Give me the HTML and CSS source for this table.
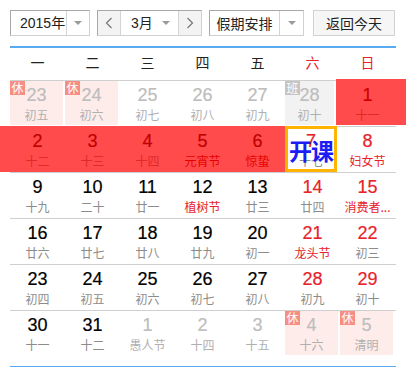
FILE: index.html
```html
<!DOCTYPE html>
<html lang="zh-CN">
<head>
<meta charset="utf-8">
<title>日历</title>
<link rel="stylesheet" href="styles.css">
</head>
<body>
<div class="cal">
  <div class="toolbar">
    <div class="sel year">
      <span class="val">2015年</span>
      <span class="drop"><i class="tri"></i></span>
    </div>
    <div class="month">
      <span class="nav"><svg width="8" height="12" viewBox="0 0 8 12"><polyline points="6.5,1 1.5,6 6.5,11" fill="none" stroke="#777" stroke-width="1.2"/></svg></span>
      <span class="mval"><span>3月</span><i class="tri"></i></span>
      <span class="nav"><svg width="8" height="12" viewBox="0 0 8 12"><polyline points="1.5,1 6.5,6 1.5,11" fill="none" stroke="#777" stroke-width="1.2"/></svg></span>
    </div>
    <div class="sel hol">
      <span class="val">假期安排</span>
      <span class="drop"><i class="tri"></i></span>
    </div>
    <button class="back">返回今天</button>
  </div>
  <div class="rule"></div>
  <div class="weekdays">
    <span>一</span><span>二</span><span>三</span><span>四</span><span>五</span><span class="we">六</span><span class="we sun">日</span>
  </div>
  <div class="weeks">
    <div class="week">
      <div class="d other rest"><span class="badge">休</span><b>23</b><em>初五</em></div>
      <div class="d other rest"><span class="badge">休</span><b>24</b><em>初六</em></div>
      <div class="d other"><b>25</b><em>初七</em></div>
      <div class="d other"><b>26</b><em>初八</em></div>
      <div class="d other"><b>27</b><em>初九</em></div>
      <div class="d other work"><span class="badge grey">班</span><b>28</b><em>初十</em></div>
      <div class="d hotcell"><b>1</b><em>十一</em></div>
    </div>
    <div class="week">
      <div class="d band first"><b>2</b><em>十二</em></div>
      <div class="d band"><b>3</b><em>十三</em></div>
      <div class="d band"><b>4</b><em>十四</em></div>
      <div class="d band"><b>5</b><em class="fest">元宵节</em></div>
      <div class="d band"><b>6</b><em class="fest">惊蛰</em></div>
      <div class="d today"><b class="red">7</b><em>十七</em><span class="note">开课</span></div>
      <div class="d"><b class="red">8</b><em class="fest">妇女节</em></div>
    </div>
    <div class="week">
      <div class="d"><b>9</b><em>十九</em></div>
      <div class="d"><b>10</b><em>二十</em></div>
      <div class="d"><b>11</b><em>廿一</em></div>
      <div class="d"><b>12</b><em class="fest">植树节</em></div>
      <div class="d"><b>13</b><em>廿三</em></div>
      <div class="d"><b class="red">14</b><em>廿四</em></div>
      <div class="d"><b class="red">15</b><em class="fest">消费者...</em></div>
    </div>
    <div class="week">
      <div class="d"><b>16</b><em>廿六</em></div>
      <div class="d"><b>17</b><em>廿七</em></div>
      <div class="d"><b>18</b><em>廿八</em></div>
      <div class="d"><b>19</b><em>廿九</em></div>
      <div class="d"><b>20</b><em>初一</em></div>
      <div class="d"><b class="red">21</b><em class="fest">龙头节</em></div>
      <div class="d"><b class="red">22</b><em>初三</em></div>
    </div>
    <div class="week">
      <div class="d"><b>23</b><em>初四</em></div>
      <div class="d"><b>24</b><em>初五</em></div>
      <div class="d"><b>25</b><em>初六</em></div>
      <div class="d"><b>26</b><em>初七</em></div>
      <div class="d"><b>27</b><em>初八</em></div>
      <div class="d"><b class="red">28</b><em>初九</em></div>
      <div class="d"><b class="red">29</b><em>初十</em></div>
    </div>
    <div class="week last">
      <div class="d"><b>30</b><em>十一</em></div>
      <div class="d"><b>31</b><em>十二</em></div>
      <div class="d other"><b>1</b><em>愚人节</em></div>
      <div class="d other"><b>2</b><em>十四</em></div>
      <div class="d other"><b>3</b><em>十五</em></div>
      <div class="d other rest"><span class="badge">休</span><b>4</b><em>十六</em></div>
      <div class="d other rest"><span class="badge">休</span><b>5</b><em>清明</em></div>
    </div>
  </div>
  <div class="rule bottom"></div>
</div>
</body>
</html>
```

FILE: styles.css
```css
html, body {
  margin: 0;
  padding: 0;
  background: #fff;
}
body {
  font-family: "Noto Sans CJK SC", "Liberation Sans", sans-serif;
  color: #333;
  overflow: hidden;
}
.cal {
  width: 406px;
  padding-top: 10px;
}
.toolbar {
  display: flex;
  height: 26px;
  padding-left: 10px;
}
.sel, .month {
  display: flex;
  height: 26px;
  box-sizing: border-box;
  border: 1px solid #a8a8a8;
  border-right-color: #d0d0d0;
  border-bottom-color: #d0d0d0;
  background: #fff;
  font-size: 14px;
  line-height: 24px;
  color: #222;
}
.year { width: 80px; }
.year .val {
  flex: none;
  width: 55px;
  padding-left: 9px;
  box-sizing: border-box;
  white-space: nowrap;
  font-family: "Liberation Sans", "Noto Sans CJK SC", sans-serif;
}
.drop {
  flex: 1;
  border-left: 1px solid #d4d4d4;
  display: flex;
  align-items: center;
  justify-content: center;
}
.tri {
  display: block;
  width: 0;
  height: 0;
  border-left: 4px solid transparent;
  border-right: 4px solid transparent;
  border-top: 4px solid #9a9a9a;
}
.month {
  width: 105px;
  margin-left: 7px;
}
.nav {
  width: 22px;
  background: #f3f3f3;
  display: flex;
  align-items: center;
  justify-content: center;
}
.month .mval {
  flex: 1;
  border-left: 1px solid #d4d4d4;
  border-right: 1px solid #d4d4d4;
  display: flex;
  align-items: center;
  padding: 0 8px 0 10px;
  justify-content: space-between;
  white-space: nowrap;
  font-family: "Liberation Sans", "Noto Sans CJK SC", sans-serif;
}
.hol {
  width: 95px;
  margin-left: 7px;
}
.hol .val { flex: none; width: 69px; text-align: center; white-space: nowrap; }
.back {
  margin-left: 9px;
  width: 82px;
  height: 26px;
  box-sizing: border-box;
  border: 1px solid #d2d2d2;
  background: #f6f6f6;
  font-family: "Noto Sans CJK SC", sans-serif;
  font-size: 14px;
  color: #222;
  padding: 0;
  line-height: 24px;
}
.rule {
  margin: 10px 10px 0;
  height: 2px;
  background: #5aaaf2;
}
.rule.bottom {
  margin-top: 10px;
}
.weekdays {
  display: grid;
  grid-template-columns: repeat(7, 55px);
  margin: 0 10px;
  height: 32px;
}
.weekdays span {
  display: flex;
  align-items: center;
  justify-content: center;
  font-size: 14px;
  color: #222;
  padding-bottom: 4px;
  box-sizing: border-box;
}
.weekdays .we { color: #e8222a; }
.weekdays .sun { border-bottom: 1px solid #f04848; }
.weeks {
  margin: 0 10px;
}
.week {
  display: grid;
  grid-template-columns: repeat(7, 55px);
  height: 46px;
  box-sizing: border-box;
  border-top: 1px solid #cfcfcf;
}
.d {
  position: relative;
  display: flex;
  flex-direction: column;
  align-items: center;
  height: 45px;
}
.d b {
  font-family: "Liberation Sans", sans-serif;
  font-weight: normal;
  font-size: 18px;
  line-height: 20px;
  margin-top: 4px;
  color: #000;
  -webkit-text-stroke: 0.2px currentColor;
}
.d em {
  font-style: normal;
  font-size: 12px;
  line-height: 16px;
  margin-top: 2px;
  color: #8c8c8c;
  white-space: nowrap;
}
.d b.red { color: #e8222a; }
.d em.fest { color: #e8222a; }
.d.other b { color: #bdbdbd; }
.d.other em { color: #b0b0b0; }
.d.rest {
  width: 53px;
  height: 44px;
  background: #fdecea;
}
.d.work {
  width: 49px;
  height: 44px;
  background: #f2f2f2;
}
.badge {
  position: absolute;
  left: 0;
  top: 0;
  width: 15px;
  height: 14px;
  background: #f68e84;
  color: #fff;
  font-size: 12px;
  line-height: 14px;
  text-align: center;
}
.badge.grey { background: #c4c4c4; }
.d.band {
  background: #ff4b4b;
  margin-top: -1px;
  height: 46px;
}
.d.band b { color: #c00000; margin-top: 5px; }
.d.band em { color: #e02a2a; }
.d.band em.fest { color: #e80000; }
.d.band.first {
  box-shadow: -10px 0 0 #ff4b4b;
}
.d.hotcell {
  background: #ff4b4b;
  margin-top: -2px;
  height: 46px;
  box-shadow: -4px 0 0 #ff4b4b, 11px 0 0 #ff4b4b;
}
.d.hotcell b { color: #d00000; margin-top: 6px; }
.d.hotcell em { color: #e02a2a; }
.d.today {
  width: 52px;
  height: 46px;
  margin-top: -1px;
  box-sizing: border-box;
  border: 3px solid #ffb400;
}
.d.today b { margin-top: 2px; }
.note {
  position: absolute;
  left: 0;
  right: 0;
  top: 7px;
  text-align: center;
  font-size: 23px;
  line-height: 28px;
  font-weight: bold;
  color: #1c1cf5;
  letter-spacing: -1px;
}
```
